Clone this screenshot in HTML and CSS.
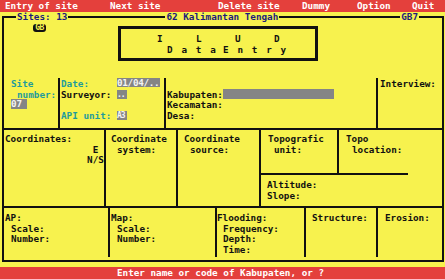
FILE: index.html
```html
<!DOCTYPE html>
<html>
<head>
<meta charset="utf-8">
<title>ILUD Data Entry</title>
<link rel="stylesheet" href="styles.css">
</head>
<body>
<div class="menu">
  <span>Entry of site</span>
  <span>Next site</span>
  <span>Delete site</span>
  <span>Dummy</span>
  <span>Option</span>
  <span>Quit</span>
</div>
<div class="screen">
  <div class="frame">
    <div class="legend">
      <span class="sites">Sites: 13</span>
      <span class="region">62 Kalimantan Tengah</span>
      <span class="code">GB7</span>
    </div>
    <div class="header">
      <span class="gb">GB</span>
      <div class="title">
        <div class="t1">ILUD</div>
        <div class="t2">Data Entry</div>
      </div>
    </div>

    <div class="row r1">
      <div class="cell w-a">
        <div class="cyan">Site</div>
        <div class="cyan ind">number:</div>
        <div class="line"><span class="field f-site">07</span></div>
      </div>
      <div class="cell w-b">
        <div class="line"><span class="lbl cyan">Date:</span><span class="field f-date">01/04/..</span></div>
        <div class="line"><span class="lbl">Surveyor:</span><span class="field f-small">..</span></div>
        <div class="line"></div>
        <div class="line"><span class="lbl cyan">API unit:</span><span class="field f-small">A3</span></div>
      </div>
      <div class="cell w-c">
        <div class="line"><span>Kabupaten:</span><span class="field f-kab"></span></div>
        <div>Kecamatan:</div>
        <div>Desa:</div>
      </div>
      <div class="cell w-d">
        <div>Interview:</div>
      </div>
    </div>

    <div class="row r2">
      <div class="cell w-coord">
        <div>Coordinates:</div>
        <div class="ens">
          <div>E</div>
          <div>N/S</div>
        </div>
      </div>
      <div class="cell w-sys">
        <div>Coordinate</div>
        <div class="ind">system:</div>
      </div>
      <div class="cell w-src">
        <div>Coordinate</div>
        <div class="ind">source:</div>
      </div>
      <div class="cell w-topo">
        <div class="topo-top">
          <div class="sub w-unit">
            <div>Topografic</div>
            <div class="ind">unit:</div>
          </div>
          <div class="sub w-loc">
            <div>Topo</div>
            <div class="ind">location:</div>
          </div>
        </div>
        <div class="topo-bottom">
          <div>Altitude:</div>
          <div>Slope:</div>
        </div>
      </div>
    </div>

    <div class="row r3">
      <div class="cell w-ap">
        <div>AP:</div>
        <div class="ind">Scale:</div>
        <div class="ind">Number:</div>
      </div>
      <div class="cell w-map">
        <div>Map:</div>
        <div class="ind">Scale:</div>
        <div class="ind">Number:</div>
      </div>
      <div class="cell w-flood">
        <div>Flooding:</div>
        <div class="ind">Frequency:</div>
        <div class="ind">Depth:</div>
        <div class="ind">Time:</div>
      </div>
      <div class="cell w-struct">
        <div>Structure:</div>
      </div>
      <div class="cell w-eros">
        <div>Erosion:</div>
      </div>
    </div>
  </div>
  <div class="status">Enter name or code of Kabupaten, or ?</div>
</div>
</body>
</html>
```

FILE: styles.css
```css
* {
  box-sizing: border-box;
  margin: 0;
  padding: 0;
}

html, body {
  width: 445px;
  height: 279px;
  overflow: hidden;
}

body {
  background: #f7f24e;
  font-family: "DejaVu Sans Mono", "Liberation Mono", monospace;
  font-weight: bold;
  font-size: 9.3px;
  line-height: 10.7px;
  color: #111;
  white-space: nowrap;
}

/* top menu bar */
.menu {
  height: 12px;
  background: #e4403c;
  color: #fff;
  display: grid;
  grid-template-columns: 105px 108px 84px 55px 55px auto;
  padding-left: 5px;
  line-height: 11px;
}

.screen {
  padding-top: 4px;
}

/* main frame */
.frame {
  margin-left: 2px;
  width: 442px;
  height: 246px;
  border: 2px solid #111;
  display: flex;
  flex-direction: column;
}

.legend {
  display: flex;
  flex: none;
  height: 9px;
  margin-top: -6px;
  line-height: 9px;
  color: #1c1c7c;
}

.legend span {
  background: #f7f24e;
  padding: 0 1px;
}

.sites { margin-left: 12px; }
.region { margin-left: 97px; }
.code { margin-left: auto; margin-right: 23px; }

.header {
  height: 57px;
  display: flex;
  align-items: flex-start;
  flex: none;
}

.gb {
  margin: 3px 0 0 29px;
  width: 13px;
  height: 8px;
  line-height: 8px;
  background: #111;
  color: #f7f24e;
  border-radius: 3px;
  font-size: 8px;
  letter-spacing: -0.6px;
  text-align: center;
}

.title {
  margin: 5px 0 0 72px;
  width: 200px;
  height: 35px;
  border: 3px solid #111;
}

.t1 {
  padding: 4px 0 0 36px;
  line-height: 11px;
  letter-spacing: 33.4px;
}

.t2 {
  padding-left: 46px;
  line-height: 11px;
  letter-spacing: 8.8px;
  word-spacing: -16px;
}

/* rows */
.row {
  display: flex;
  flex: none;
}

.r1 {
  height: 52px;
  border-bottom: 2px solid #111;
}

.r2 {
  height: 78px;
  border-bottom: 2px solid #111;
}

.r3 {
  height: 49px;
}

.cell {
  border-left: 2px solid #111;
}

.cell:first-child {
  border-left: 0;
}

.ind {
  padding-left: 6px;
}

.cyan {
  color: #1f9c9c;
}

/* row 1 */
.r1 .cell { padding-top: 1px; }
.w-a { width: 54px; padding-left: 7px; }
.w-b { width: 106px; padding-left: 1px; }
.w-c { width: 212px; padding-left: 1px; }
.r1 .w-c { padding-top: 11.7px; }
.w-d { width: 66px; padding-left: 2px; }

.line {
  display: flex;
  height: 10.7px;
}

.lbl {
  width: 56px;
}

.field {
  display: block;
  background: #858585;
  color: #f4f4f4;
  height: 9px;
  line-height: 9px;
}

.f-site { width: 16px; height: 10px; margin-top: -1px; }
.f-date { width: 43px; margin-top: -1px; letter-spacing: -0.3px; }
.f-small { width: 10px; font-size: 8px; letter-spacing: -1px; }
.f-kab { width: 111px; height: 10px; margin-top: -1px; }

/* row 2 */
.r2 .cell { padding-top: 4px; }
.w-coord { width: 100px; padding-left: 1px; }
.ens {
  width: 17px;
  margin-left: 82px;
  text-align: center;
}
.w-sys { width: 72px; padding-left: 5px; }
.w-src { width: 83px; padding-left: 6px; }
.r2 .w-topo {
  width: 183px;
  padding-top: 0;
  display: flex;
  flex-direction: column;
}
.topo-top {
  display: flex;
  height: 43px;
}
.sub { padding-top: 4px; }
.w-unit { width: 76px; padding-left: 7px; }
.w-loc { width: 105px; padding-left: 7px; border-left: 2px solid #111; }
.topo-bottom {
  width: 147px;
  border-top: 2px solid #111;
  padding: 5px 0 0 6px;
}

/* row 3 */
.r3 .cell { padding-top: 5px; }
.w-ap { width: 104px; padding-left: 1px; }
.w-map { width: 107px; padding-left: 1px; }
.w-flood { width: 89px; }
.w-struct { width: 72px; padding-left: 6px; }
.w-eros { width: 66px; padding-left: 7px; }

/* status bar */
.status {
  margin-top: 5px;
  height: 12px;
  background: #e4403c;
  color: #fff;
  text-align: center;
  line-height: 12px;
  padding-right: 4px;
}
```
